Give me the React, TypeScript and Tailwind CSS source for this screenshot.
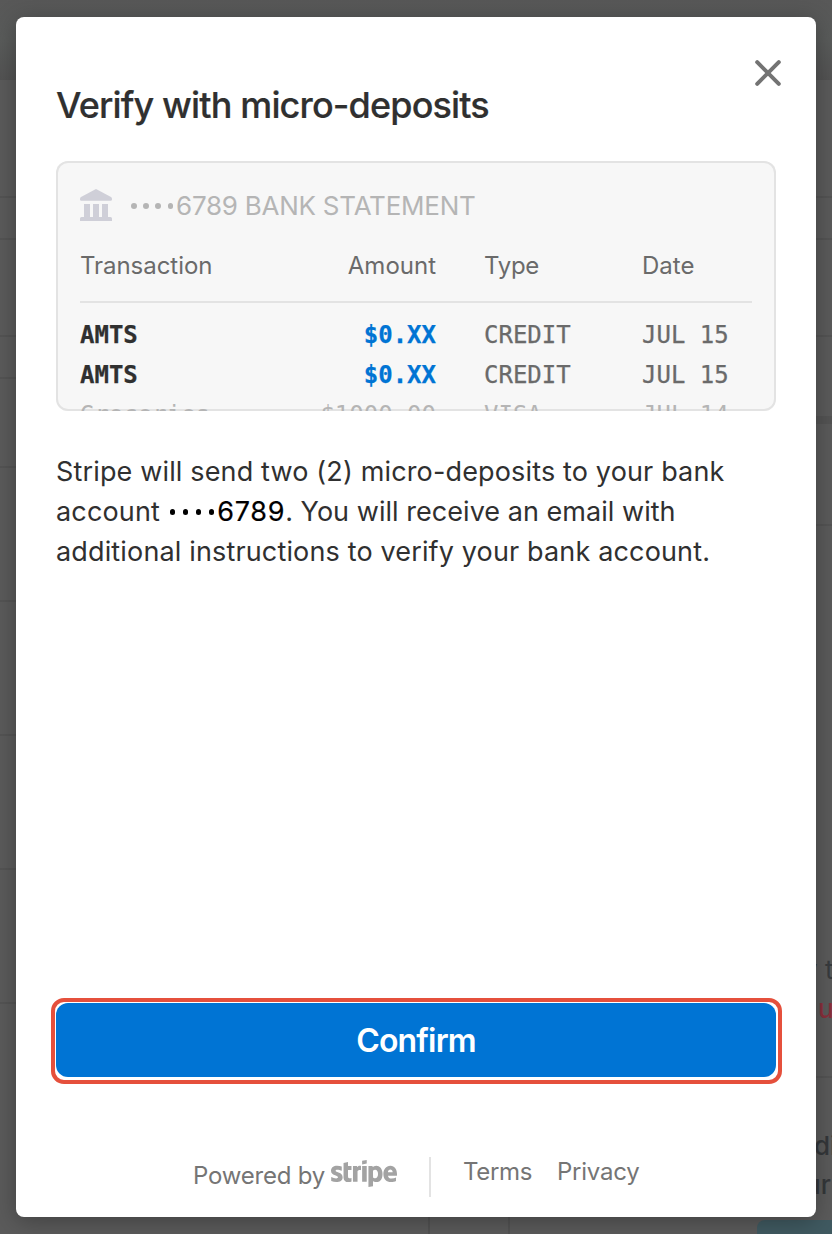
import { FaStripe } from "react-icons/fa";

const leftLines = [
  "top-[196px]", "top-[238px]", "top-[335px]", "top-[377px]", "top-[466px]",
  "top-[600px]", "top-[734px]", "top-[868px]", "top-[1002px]",
];
const rightLines = ["top-[196px]", "top-[238px]", "top-[335px]", "top-[524px]", "top-[1076px]"];

function Backdrop() {
  return (
    <div aria-hidden="true" className="absolute inset-0 overflow-hidden">
      <div className="absolute inset-x-0 top-0 h-20 bg-gradient-to-b from-[#585858] via-[#5a5c5b] to-[#535353]" />
      {leftLines.map((t) => (
        <div key={t} className={`absolute left-0 h-[2px] w-4 bg-[#545454] ${t}`} />
      ))}
      {rightLines.map((t) => (
        <div key={t} className={`absolute right-0 h-[2px] w-4 bg-[#545454] ${t}`} />
      ))}
      <div className="absolute top-[416px] right-0 h-2 w-4 bg-[#545454]" />
      <div className="absolute top-[1216px] left-[428px] h-5 w-[2px] bg-[#525252]" />
      <div className="absolute top-[1216px] left-[508px] h-5 w-[2px] bg-[#535353]" />
      <div className="absolute top-[957px] left-[803px] text-[26px] leading-[26px] whitespace-pre text-[#383b3e]">y to</div>
      <div className="absolute top-[996px] left-[818px] text-[26px] leading-[26px] font-medium text-[#8a303c]">us</div>
      <div className="absolute top-[1133px] left-[814px] text-[26px] leading-[26px] font-medium text-[#34373a]">dit</div>
      <div className="absolute top-[1172px] left-[805px] text-[26px] leading-[26px] font-medium text-[#34373a]">ur</div>
      <div className="absolute top-[1220px] left-[757px] h-10 w-24 rounded-lg bg-[#405a61]" />
    </div>
  );
}

function BankIcon() {
  return (
    <svg viewBox="0 0 32 32" className="size-8 shrink-0" fill="#cfcfd8">
      <path d="M16 0 31 8Q32 8.600 32 10v.4q0 1.400-1.400 1.400H1.400Q0 11.800 0 10.400V10q0-1.400 1-2ZM4 15h6v13H4zM13 15h6v13h-6zM22 15h6v13h-6zM0 32v-2.500Q0 28 1.500 28h29Q32 28 32 29.500V32z" />
    </svg>
  );
}

function Dots({ className, dark }: { className: string; dark?: boolean }) {
  return (
    <span className={`flex items-center ${className}`}>
      {[0, 1, 2, 3].map((i) => (
        <i key={i} className={`size-[5.500px] rounded-full ${dark ? "bg-black" : "bg-[#b5b5b5]"}`} />
      ))}
    </span>
  );
}

function Footer() {
  return (
    <footer className="flex h-[133px] shrink-0 items-start pt-[73px] pl-[137px] text-[24px] leading-[30px] whitespace-nowrap text-[#757575]">
      <span className="mt-1 w-[138px] tracking-[-0.200px]">Powered by</span>
      <span className="mt-px flex h-[30px] w-[66px] items-center justify-center">
        <FaStripe className="h-[53px] w-[66px] shrink-0 text-[#a3a3a3]" aria-label="stripe" />
      </span>
      <span className="ml-8 h-10 w-[2px] bg-[#e3e3e3]" />
      <a className="ml-8 w-[94px] tracking-[-0.300px]">Terms</a>
      <a className="tracking-[-0.250px]">Privacy</a>
    </footer>
  );
}

export default function App() {
  return (
    <div className="relative h-[1234px] w-[832px] overflow-hidden bg-[#5b5b5b] font-['Inter',sans-serif]">
      <Backdrop />
      <main className="relative mx-4 mt-[17px] flex h-[1200px] flex-col rounded-lg bg-white px-10 text-[#303030] shadow-[0_4px_24px_rgba(0,0,0,0.3)]">
        <div className="flex h-[144px] shrink-0 justify-between">
          <h1 className="mt-[66px] text-[36px] leading-[44px] font-medium tracking-[-0.860px] whitespace-nowrap [-webkit-text-stroke:0.2px_#303030]">
            Verify with micro-deposits
          </h1>
          <button aria-label="Close" className="mt-[42px] -mr-[6px] size-7">
            <svg viewBox="0 0 28 28" className="size-7" stroke="#737373" strokeWidth="4" strokeLinecap="round">
              <path d="M3.200 3.200 24.800 24.800M24.800 3.200 3.200 24.800" />
            </svg>
          </button>
        </div>

        <section className="h-[250px] shrink-0 overflow-hidden rounded-xl bg-[#f7f7f7] px-6 pt-7 shadow-[inset_0_0_0_2px_#e3e3e3]">
          <div className="flex h-8 items-center">
            <BankIcon />
            <div className="mt-[2px] ml-[17px] flex text-[26px] leading-8 whitespace-nowrap text-[#b5b5b5]">
              <Dots className="mr-[3px] gap-[6.700px] pl-[2px]" />
              <span className="tracking-[-0.250px]">6789 BANK STATEMENT</span>
            </div>
          </div>
          <div className="mt-[29px] grid grid-cols-[180px_176px_110px_158px] text-[24px] leading-8 text-[#6a6a6a]">
            <span className="tracking-[-0.050px]">Transaction</span>
            <span className="text-right">Amount</span>
            <span className="pl-12 tracking-[-0.300px]">Type</span>
            <span className="pl-24">Date</span>
          </div>
          <div className="mt-[19px] h-[2px] bg-[#e3e3e3]" />
          <div className="mt-[12px] font-['DejaVu_Sans_Mono',monospace] text-[24px] leading-10 whitespace-nowrap text-[#6a6a6a]">
            {[0, 1].map((i) => (
              <div key={i} className="grid grid-cols-[180px_176px_206px_110px] [-webkit-text-stroke:0.25px_currentColor]">
                <span className="font-bold text-[#303030]">AMTS</span>
                <span className="text-right font-bold text-[#0074d4]">$0.XX</span>
                <span className="pl-12">CREDIT</span>
                <span>JUL 15</span>
              </div>
            ))}
            <div className="grid grid-cols-[180px_176px_206px_110px] text-[#b5b5b5]">
              <span>Groceries</span>
              <span className="text-right">$1000.00</span>
              <span className="pl-12">VISA</span>
              <span>JUL 14</span>
            </div>
          </div>
        </section>

        <p className="mt-[41px] text-[27px] leading-10 tracking-[0.150px] whitespace-nowrap">
          <span className="block">Stripe will send two (2) micro-deposits to your bank</span>
          <span className="flex whitespace-pre">
            <span>account </span>
            <Dots className="mr-[3px] gap-[7.500px] pl-[2px]" dark />
            <span className="tracking-[0.700px] text-black [-webkit-text-stroke:0.2px_#000]">6789</span>
            <span className="tracking-[0.040px]">. You will receive an email with</span>
          </span>
          <span className="block">additional instructions to verify your bank account.</span>
        </p>

        <div className="mt-auto -mr-[6px] -ml-[5px] h-[86px] shrink-0 rounded-[13px] border-4 border-[#e5503c] pt-px pr-[2px] pl-px">
          <button className="h-[74px] w-full rounded-xl bg-[#0074d4] pt-[2px] text-[32px] leading-10 font-semibold tracking-[-0.850px] text-white">
            Confirm
          </button>
        </div>
        <Footer />
      </main>
    </div>
  );
}
